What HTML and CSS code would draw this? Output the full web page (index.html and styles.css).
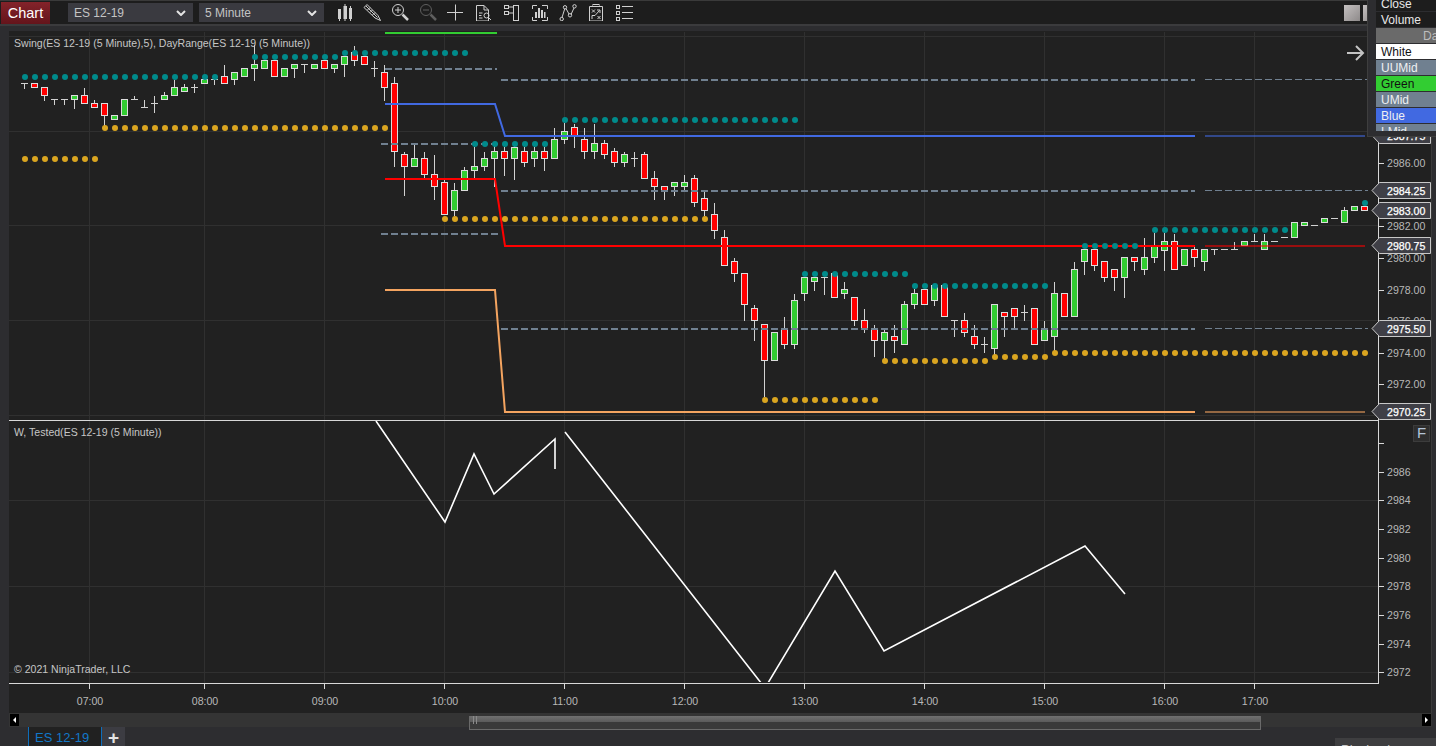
FILE: index.html
```html
<!DOCTYPE html>
<html lang="en">
<head>
    <meta charset="UTF-8">
    <title>Chart - ES 12-19</title>
    <link rel="stylesheet" href="styles.css">
</head>
<body>
    <div class="app">
        <div class="toolbar">
            <div class="chart-tab">Chart</div>
            <div class="picker picker-first"><span class="picker-text">ES 12-19</span> <svg class="chevron" viewBox="0 0 10 6"><path d="M1 1l4 4 4-4"/></svg></div>
            <div class="picker"><span class="picker-text">5 Minute</span> <svg class="chevron" viewBox="0 0 10 6"><path d="M1 1l4 4 4-4"/></svg></div>

            <div class="tools">
                <!-- bars -->
                <svg class="tool" viewBox="0 0 18 18">
                    <path d="M4.5 6v12M10 1v18M15.5 3v15"/>
                    <rect class="solid" x="3" y="6" width="3" height="10"/>
                    <rect class="solid" x="8.5" y="3" width="3.5" height="13"/>
                    <rect class="solid" x="14" y="5" width="3" height="11"/>
                </svg>
                <!-- pencil -->
                <svg class="tool" viewBox="0 0 18 18">
                    <path d="M1 4.5L4 1.5 15 12.5 17.5 17.5 12 15Z"/>
                    <path d="M3 3l11.5 11.5M4.5 7l2.5-2.5M7 9.5l2.5-2.5M9.5 12l2.5-2.5"/>
                </svg>
                <!-- zoom in -->
                <svg class="tool" viewBox="0 0 18 18">
                    <circle cx="7" cy="7" r="5.5"/>
                    <path d="M4 7h6M7 4v6"/>
                    <path class="thick" d="M11.5 11.5L17 17"/>
                </svg>
                <!-- zoom out -->
                <svg class="tool tool-off" viewBox="0 0 18 18">
                    <circle cx="7" cy="7" r="5.5"/>
                    <path d="M4 7h6"/>
                    <path class="thick" d="M11.5 11.5L17 17"/>
                </svg>
                <!-- crosshair -->
                <svg class="tool" viewBox="0 0 18 18"><path d="M0 9.5h16M8.5 1.5v16"/></svg>
                <!-- data series -->
                <svg class="tool" viewBox="0 0 18 18">
                    <path d="M1.5 2.5H9L13.5 7V18H1.5ZM9 2.5V7H13.5"/>
                    <path d="M4 10h3.5M4 12.5h2.5M4 15h3.5"/>
                    <circle cx="11.5" cy="12.5" r="2.5"/>
                    <path d="M13.5 14.5L16 17"/>
                </svg>
                <!-- properties -->
                <svg class="tool" viewBox="0 0 18 18">
                    <rect x="1.5" y="2.5" width="4" height="3"/>
                    <rect x="1.5" y="8.5" width="4" height="3"/>
                    <rect x="10.5" y="2.5" width="5" height="15"/>
                    <path d="M5.5 4h5M5.5 10h5"/>
                </svg>
                <!-- data box -->
                <svg class="tool" viewBox="0 0 18 18">
                    <path d="M1.5 6V2.5H6M11 2.5H16.5V6M1.5 14V17.5H6M11 17.5H16.5V14"/>
                    <rect class="solid" x="4" y="9" width="2" height="6"/>
                    <rect class="solid" x="7" y="5" width="2" height="10"/>
                    <rect class="solid" x="10" y="7" width="2" height="8"/>
                    <rect class="solid" x="13" y="9" width="1.5" height="6"/>
                </svg>
                <!-- drawing tools -->
                <svg class="tool" viewBox="0 0 18 18">
                    <path d="M3 14.5L5.7 6M7 5.5L10 11M12 11.5L15 5"/>
                    <circle cx="2.7" cy="16" r="1.7"/>
                    <circle cx="6" cy="4.3" r="1.7"/>
                    <circle cx="11" cy="12.3" r="1.7"/>
                    <circle cx="15.5" cy="3.3" r="1.7"/>
                </svg>
                <!-- strategy -->
                <svg class="tool" viewBox="0 0 18 18">
                    <path d="M6 3.5H2.5V18H15.5V3.5H12"/>
                    <rect x="6" y="1.5" width="6" height="2"/>
                    <path d="M5 6.5l3 3M8 6.5l-3 3M10.5 13l3 3M13.5 13l-3 3M5 16v-3.5h3l4.5-5M10 7h3v3"/>
                </svg>
                <!-- list -->
                <svg class="tool" viewBox="0 0 18 18">
                    <rect x="1.5" y="2.5" width="3" height="3"/>
                    <rect x="1.5" y="8.5" width="3" height="3"/>
                    <rect x="1.5" y="14.5" width="3" height="3"/>
                    <path d="M7 3.5h11M7 9.5h11M7 15.5h11"/>
                </svg>
            </div>

            <div class="win-btns">
                <div class="win-btn"></div>
                <div class="win-btn"></div>
            </div>
        </div>

        <div class="band"></div>

        <svg class="chart" id="chart" viewBox="9 31 1423 682">
            <defs>
                <clipPath id="upper-clip"><rect x="9" y="32" width="1369" height="388"/></clipPath>
                <clipPath id="lower-clip"><rect x="9" y="421" width="1369" height="261"/></clipPath>
            </defs>

            <g id="grid"></g>
            <g id="candles" clip-path="url(#upper-clip)"></g>

            <!-- day range, left day -->
            <path class="day-line green-line" d="M385 33H497"/>
            <path class="dash" d="M385 69H497M381 144H498M381 234H498"/>

            <!-- day range, current day -->
            <path class="dash" d="M501 80H1195M501 191H1195M501 329H1195"/>
            <path class="dash-thin" d="M1205 79.5H1368M1205 190.5H1368M1205 328.5H1368"/>
            <path class="day-line blue-line" d="M385 104H495L505 136H1195"/>
            <path class="day-line red-line" d="M385 179H495L505 246H1195"/>
            <path class="day-line sand-line" d="M385 290H495L505 412H1195"/>
            <path class="day-line blue-line dim" d="M1205 136H1365"/>
            <path class="day-line red-line dim" d="M1205 246H1365"/>
            <path class="day-line sand-line dim" d="M1205 412H1365"/>

            <g id="dots"></g>

            <path class="arrow" d="M1347 53H1363M1356 46L1363 53 1356 60"/>

            <text class="title" x="14" y="47">Swing(ES 12-19 (5 Minute),5), DayRange(ES 12-19 (5 Minute))</text>

            <!-- lower panel -->
            <g clip-path="url(#lower-clip)">
                <polyline class="tested" points="376,421 445,522 474,454 494,494 555,439 555,469"/>
                <polyline class="tested" points="565,432 765,688 835,571 884,651 1085,546 1125,594"/>
            </g>
            <text class="title" x="14" y="436">W, Tested(ES 12-19 (5 Minute))</text>
            <text class="title" x="14" y="673">© 2021 NinjaTrader, LLC</text>

            <g id="axes"></g>
            <g id="flags"></g>

            <rect class="f-btn" x="1413.5" y="425.5" width="16" height="16"/>
            <text class="f-text" x="1421.5" y="438">F</text>
        </svg>

        <div class="scrollbar">
            <div class="scroll-end"><svg viewBox="0 0 9 12"><path d="M6 3v6L3 6Z"/></svg></div>
            <div class="scroll-track">
                <div class="scroll-thumb"><span class="grip"></span></div>
            </div>
            <div class="scroll-end"><svg viewBox="0 0 9 12"><path d="M3 3v6L6 6Z"/></svg></div>
        </div>

        <div class="tabs">
            <div class="tab">ES 12-19</div>
            <div class="tab-add">+</div>
            <div class="corner-panel">Playback</div>
        </div>

        <div class="legend">
            <div class="legend-row legend-dark">Close</div>
            <div class="legend-row legend-dark">Volume</div>
            <div class="legend-row legend-head">Day</div>
            <div class="legend-row legend-white">White</div>
            <div class="legend-row legend-slate">UUMid</div>
            <div class="legend-row legend-green">Green</div>
            <div class="legend-row legend-slate">UMid</div>
            <div class="legend-row legend-blue">Blue</div>
            <div class="legend-row legend-slate legend-last">LMid</div>
        </div>
    </div>

    <script src="script.js"></script>
</body>
</html>
```

FILE: styles.css
```css
* {
    box-sizing: border-box;
}

body {
    margin: 0;
    background-color: #2d2d30;
    font-family: "Liberation Sans", Arial, sans-serif;
    overflow: hidden;
}

.app {
    position: relative;
    width: 1436px;
    height: 746px;
    overflow: hidden;
    display: flex;
    flex-direction: column;
}

.toolbar {
    height: 24px;
    background-color: #1d1d1d;
    border-top: 1px solid #3a3a3a;
    display: flex;
    align-items: center;
    flex-shrink: 0;
}

.chart-tab {
    width: 49px;
    height: 22px;
    margin-left: 1px;
    background: linear-gradient(#84232a, #64141b);
    color: #fff;
    font-size: 14.5px;
    line-height: 22px;
    text-align: center;
}

.picker {
    width: 125px;
    height: 19px;
    margin-left: 6px;
    padding: 0 5px 0 6px;
    background-color: #3a3a40;
    color: #c4c4c4;
    font-size: 12px;
    line-height: 19px;
    display: flex;
    justify-content: space-between;
    align-items: center;
}

.picker-text {
    padding-top: 2px;
}

.picker-first {
    margin-left: 18px;
}

.chevron {
    width: 10px;
    height: 6px;
    margin-right: 2px;
    fill: none;
    stroke: #e4e4e4;
    stroke-width: 2;
}

.tools {
    margin-left: 11px;
    margin-bottom: 1px;
    display: flex;
    gap: 10px;
}

.tool {
    width: 18px;
    height: 18px;
    fill: none;
    stroke: #d0d0d0;
    stroke-width: 1;
}

.tool .solid {
    fill: #d0d0d0;
    stroke: none;
}

.tool .thick {
    stroke-width: 2.5;
}

.tool-off {
    stroke: #5e5e5e;
}

.win-btns {
    margin-left: auto;
    padding-right: 57px;
    display: flex;
    gap: 3px;
}

.win-btn {
    width: 16px;
    height: 16px;
    background: linear-gradient(135deg, #c4c0c0, #8e8a8a);
}

.band {
    height: 7px;
    flex-shrink: 0;
    background-color: #2d2d30;
    border-top: 2px solid #3b3b3d;
}

.chart {
    display: block;
    width: 1423px;
    height: 682px;
    margin-left: 9px;
    flex-shrink: 0;
    background-color: #212121;
}

.grid-line {
    stroke: #303030;
    stroke-width: 1;
}

.wick {
    stroke: #d2d2d2;
    stroke-width: 1;
}

.body {
    stroke: #dcdcdc;
    stroke-width: 1;
}

.body-red {
    fill: #ff0000;
}

.body-green {
    fill: #32cd32;
}

.dot-teal {
    fill: #008b8b;
}

.dot-gold {
    fill: #daa520;
}

.day-line {
    fill: none;
    stroke-width: 2;
}

.green-line {
    stroke: #32cd32;
}

.blue-line {
    stroke: #4169e1;
}

.red-line {
    stroke: #ff0000;
}

.sand-line {
    stroke: #f4a460;
}

.dim {
    opacity: 0.55;
}

.dash {
    fill: none;
    stroke: #708090;
    stroke-width: 2;
    stroke-dasharray: 7 3;
}

.dash-thin {
    fill: none;
    stroke: #708090;
    stroke-width: 1;
    stroke-dasharray: 7 3;
}

.arrow {
    fill: none;
    stroke: #c4c4c4;
    stroke-width: 2;
}

.title {
    fill: #c6c6c6;
    font-size: 10.55px;
}

.tested {
    fill: none;
    stroke: #ffffff;
    stroke-width: 1.6;
}

.axis-line {
    stroke: #d8d8d8;
    stroke-width: 1;
}

.edge-line {
    stroke: #3a3a3a;
    stroke-width: 1;
}

.axis-text {
    fill: #b8b8b8;
    font-size: 10.6px;
}

.flag {
    fill: #3f3f46;
    stroke: #c8c8c8;
    stroke-width: 1;
}

.flag-text {
    fill: #ffffff;
    stroke: #ffffff;
    stroke-width: 0.25px;
    font-size: 10.6px;
}

.f-btn {
    fill: #2e2e2e;
    stroke: #3c3c3c;
}

.f-text {
    fill: #b4c4d8;
    font-size: 15px;
    text-anchor: middle;
}

.scrollbar {
    height: 14px;
    margin-left: 9px;
    margin-right: 4px;
    flex-shrink: 0;
    background-color: #343434;
    display: flex;
    align-items: center;
}

.scroll-end {
    width: 9px;
    height: 12px;
    margin: 0 1px;
    background-color: #000;
}

.scroll-end svg {
    display: block;
    width: 9px;
    height: 12px;
    fill: #fff;
}

.scroll-track {
    flex: 1;
    height: 14px;
}

.scroll-thumb {
    width: 792px;
    height: 14px;
    margin-left: 449px;
    background: linear-gradient(#707070, #5a5a5a 50%, #3a3a3a 50%, #3a3a3a);
    border: 1px solid #6a6a6a;
    border-top: none;
    padding-left: 3px;
}

.grip {
    display: block;
    width: 4px;
    height: 8px;
    margin-top: 3px;
    border-left: 1px solid #8a8a8a;
    border-right: 1px solid #8a8a8a;
}

.tabs {
    height: 19px;
    padding-left: 28px;
    display: flex;
    flex-shrink: 0;
}

.tab {
    width: 74px;
    padding-left: 6px;
    background-color: #212121;
    border-left: 1px solid #0e6ebc;
    border-right: 1px solid #0e6ebc;
    color: #1277c8;
    font-size: 13px;
    line-height: 22px;
}

.tab-add {
    width: 23px;
    background-color: #3c3c42;
    color: #e4e4e4;
    font-size: 19px;
    font-weight: bold;
    line-height: 21px;
    text-align: center;
}

.corner-panel {
    width: 101px;
    height: 8px;
    margin-top: 11px;
    margin-left: auto;
    padding-left: 6px;
    background-color: #3e3e40;
    overflow: hidden;
    color: #c8c8c8;
    font-size: 13px;
    line-height: 23px;
}

/* colour legend that sits over the chart */
.legend {
    position: absolute;
    top: -4px;
    left: 1367px;
    width: 69px;
    height: 141px;
    padding-left: 8px;
    overflow: hidden;
    background-color: #2d2d30;
    border-left: 1px solid #3e3e3e;
    border-bottom: 1px solid #3e3e3e;
    font-size: 12px;
}

.legend-row {
    height: 15px;
    margin-bottom: 1px;
    padding-top: 1px;
    padding-left: 5px;
    overflow: hidden;
    line-height: 15px;
    white-space: nowrap;
}

.legend-dark {
    background-color: #1d1d1d;
    color: #e8e8e8;
}

.legend-head {
    background-color: #6a6a6a;
    color: #bdbdbd;
    padding-left: 47px;
}

.legend-white {
    background-color: #ffffff;
    color: #111;
}

.legend-slate {
    background-color: #708090;
    color: #eef0f2;
}

.legend-green {
    background-color: #32cd32;
    color: #111;
}

.legend-blue {
    background-color: #4169e1;
    color: #eef0f2;
}

.legend-last {
    height: 7px;
}
```

FILE: script.js
```js
const SVG_NS = 'http://www.w3.org/2000/svg';

function add(parent, tag, attrs, text) {
    const el = document.createElementNS(SVG_NS, tag);
    Object.keys(attrs).forEach(key => el.setAttribute(key, attrs[key]));
    if (text) el.textContent = text;
    parent.appendChild(el);
    return el;
}

// [colour, body top, body bottom, wick top, wick bottom], one every 10px from x=24.5
const candles = [
    ['d',83,83,83,88], ['r',83,87], ['r',87,95,87,100], ['d',99,99,99,104], ['d',99,99,99,104],
    ['g',95,99,95,108], ['r',95,103,88,103], ['r',103,107,100,107], ['r',103,115,103,126], ['g',115,119],
    ['g',99,115], ['d',99,99,96,99], ['d',107,107,100,107], ['d',103,103,96,112], ['g',95,99,92,99],
    ['g',87,95,80,95], ['g',87,91,84,91], ['d',87,87,84,92], ['g',79,83], ['d',79,79,79,84],
    ['r',76,83,65,83], ['g',72,79,72,84], ['g',68,76], ['g',64,68,45,80], ['g',60,68],
    ['r',60,76], ['g',68,76], ['g',64,68,64,77], ['d',64,64,64,72], ['g',64,68],
    ['r',60,68], ['g',64,68,64,72], ['g',56,64,56,76], ['r',52,60,46,65], ['r',56,64],
    ['d',68,68,61,76], ['r',72,87,65,100], ['r',83,151,77,166], ['r',154,166,152,195], ['g',158,166,145,166],
    ['r',158,174,152,178], ['r',174,186,155,199], ['r',182,214,180,214], ['g',190,210,183,215], ['g',170,190,167,190],
    ['g',166,170,147,178], ['g',158,166,152,170], ['g',151,158,143,186], ['r',151,158,147,175], ['g',147,158,143,179],
    ['r',151,162,147,166], ['g',151,158,147,166], ['r',151,158,147,170], ['g',139,158,128,158], ['g',131,139,123,143],
    ['r',127,135,124,147], ['r',139,151,128,158], ['g',143,151,124,158], ['r',143,154,140,158], ['r',151,162,148,166],
    ['g',154,162,152,166], ['d',158,158,152,166], ['r',154,178,152,178], ['r',178,186,171,199], ['r',186,190,186,199],
    ['g',182,186,182,195], ['g',182,186,175,191], ['r',178,202,175,206], ['r',198,210,192,215], ['r',214,230,203,238],
    ['r',237,265,230,265], ['r',261,273,258,281], ['r',273,304,273,320], ['r',308,320,305,340], ['r',324,360,324,396],
    ['g',332,360], ['r',328,344,317,348], ['g',300,344,294,348], ['g',277,293,277,300], ['g',277,281,277,290],
    ['d',277,277,277,294], ['r',273,297], ['g',289,293,282,298], ['r',297,320,297,325], ['r',320,328,309,332],
    ['r',329,340,325,356], ['g',332,340,330,360], ['r',336,340,325,352], ['g',304,344,301,344], ['g',293,304,289,308],
    ['r',289,304], ['g',285,300,285,305], ['r',285,316], ['d',320,320,320,336], ['r',320,332,313,336],
    ['r',336,344,325,348], ['d',344,344,337,352], ['g',304,348,304,356], ['r',312,316,312,336], ['r',308,316,308,328],
    ['d',312,312,305,320], ['r',308,344], ['g',328,340,321,340], ['g',293,336,282,352], ['r',293,316],
    ['g',269,316,262,316], ['g',249,261,249,274], ['r',249,265,249,270], ['r',261,277,261,281], ['r',269,277,269,290],
    ['g',257,277,257,297], ['r',257,261,257,270], ['g',257,269,238,274], ['g',246,257,233,262], ['g',241,250,233,270],
    ['r',241,269,234,269], ['g',249,265], ['r',249,257,246,266], ['g',249,261,249,270], ['d',249,249,249,254],
    ['d',249,249], ['d',249,249,242,249], ['g',241,245], ['d',241,241,234,241], ['g',241,249,234,249],
    ['d',241,241], ['d',237,237], ['g',222,237], ['g',222,225], ['d',225,225],
    ['g',218,222], ['d',218,218], ['g',210,222,207,222], ['g',206,210], ['r',206,210]
];

// [class, y, first x, last x]
const dotRows = [
    ['dot-teal',77,25,215], ['dot-teal',57,255,335], ['dot-teal',53,345,465], ['dot-teal',144,475,545],
    ['dot-teal',120,565,795], ['dot-teal',274,805,905], ['dot-teal',286,915,1045], ['dot-teal',246,1085,1135],
    ['dot-teal',230,1155,1285], ['dot-teal',203,1365,1365],
    ['dot-gold',159,25,95], ['dot-gold',128,105,385], ['dot-gold',219,445,705], ['dot-gold',400,765,875],
    ['dot-gold',361,885,985], ['dot-gold',357,995,1045], ['dot-gold',353,1055,1365]
];

const gridX = [90, 205, 325, 445, 565, 685, 805, 925, 1045, 1165, 1255];
const gridY = [36, 131, 225, 320, 415, 500, 586, 672];
const times = ['07:00','08:00','09:00','10:00','11:00','12:00','13:00','14:00','15:00','16:00','17:00'];

const upperPrices = [
    ['2986.00',163], ['2984.00',195], ['2982.00',226], ['2980.00',258],
    ['2978.00',290], ['2976.00',321], ['2974.00',353], ['2972.00',384]
];
const lowerPrices = [
    ['',443], ['2986',472], ['2984',500], ['2982',529], ['2980',558],
    ['2978',586], ['2976',615], ['2974',644], ['2972',672]
];
const flags = [
    ['2987.75',136], ['2984.25',191], ['2983.00',211], ['2980.75',246], ['2975.50',329], ['2970.25',412]
];

const grid = document.getElementById('grid');
gridX.forEach(x => {
    add(grid, 'line', { class: 'grid-line', x1: x - 0.5, x2: x - 0.5, y1: 32, y2: 683 });
});
gridY.forEach(y => {
    add(grid, 'line', { class: 'grid-line', x1: 9, x2: 1378, y1: y + 0.5, y2: y + 0.5 });
});

// candles
const candleLayer = document.getElementById('candles');
candles.forEach((c, i) => {
    const x = 24.5 + i * 10;
    const top = c[1] + 0.5;
    const bottom = c[2] + 0.5;
    if (c[3] !== undefined) {
        add(candleLayer, 'line', { class: 'wick', x1: x, x2: x, y1: c[3], y2: c[4] + 1 });
    }
    if (c[0] === 'd') {
        add(candleLayer, 'line', { class: 'wick', x1: x - 3.5, x2: x + 3.5, y1: top, y2: top });
    } else {
        add(candleLayer, 'rect', {
            class: 'body ' + (c[0] === 'r' ? 'body-red' : 'body-green'),
            x: x - 3,
            y: top,
            width: 6,
            height: bottom - top
        });
    }
});

// swing dots
const dotLayer = document.getElementById('dots');
dotRows.forEach(row => {
    for (let x = row[2]; x <= row[3]; x += 10) {
        add(dotLayer, 'circle', { class: row[0], cx: x, cy: row[1], r: 3 });
    }
});

// axes and scale text
const axes = document.getElementById('axes');
add(axes, 'line', { class: 'axis-line', x1: 1378.5, x2: 1378.5, y1: 32, y2: 684 });
add(axes, 'line', { class: 'axis-line', x1: 9, x2: 1379, y1: 420.5, y2: 420.5 });
add(axes, 'line', { class: 'axis-line', x1: 9, x2: 1379, y1: 683.5, y2: 683.5 });
add(axes, 'line', { class: 'edge-line', x1: 1431.5, x2: 1431.5, y1: 32, y2: 713 });

upperPrices.concat(lowerPrices).forEach(p => {
    add(axes, 'line', { class: 'axis-line', x1: 1379, x2: 1384, y1: p[1] + 0.5, y2: p[1] + 0.5 });
    if (p[0]) add(axes, 'text', { class: 'axis-text', x: 1387, y: p[1] + 4 }, p[0]);
});

gridX.forEach((x, i) => {
    add(axes, 'line', { class: 'axis-line', x1: x - 0.5, x2: x - 0.5, y1: 684, y2: 689 });
    add(axes, 'text', { class: 'axis-text', x: x, y: 705, 'text-anchor': 'middle' }, times[i]);
});

// price markers on the scale
const flagLayer = document.getElementById('flags');
flags.forEach(f => {
    const y = f[1] - 0.5;
    add(flagLayer, 'polygon', {
        class: 'flag',
        points: `1372,${y} 1379.5,${y - 8} 1430.5,${y - 8} 1430.5,${y + 8} 1379.5,${y + 8}`
    });
    add(flagLayer, 'text', { class: 'flag-text', x: 1387, y: y + 4.5 }, f[0]);
});
```
